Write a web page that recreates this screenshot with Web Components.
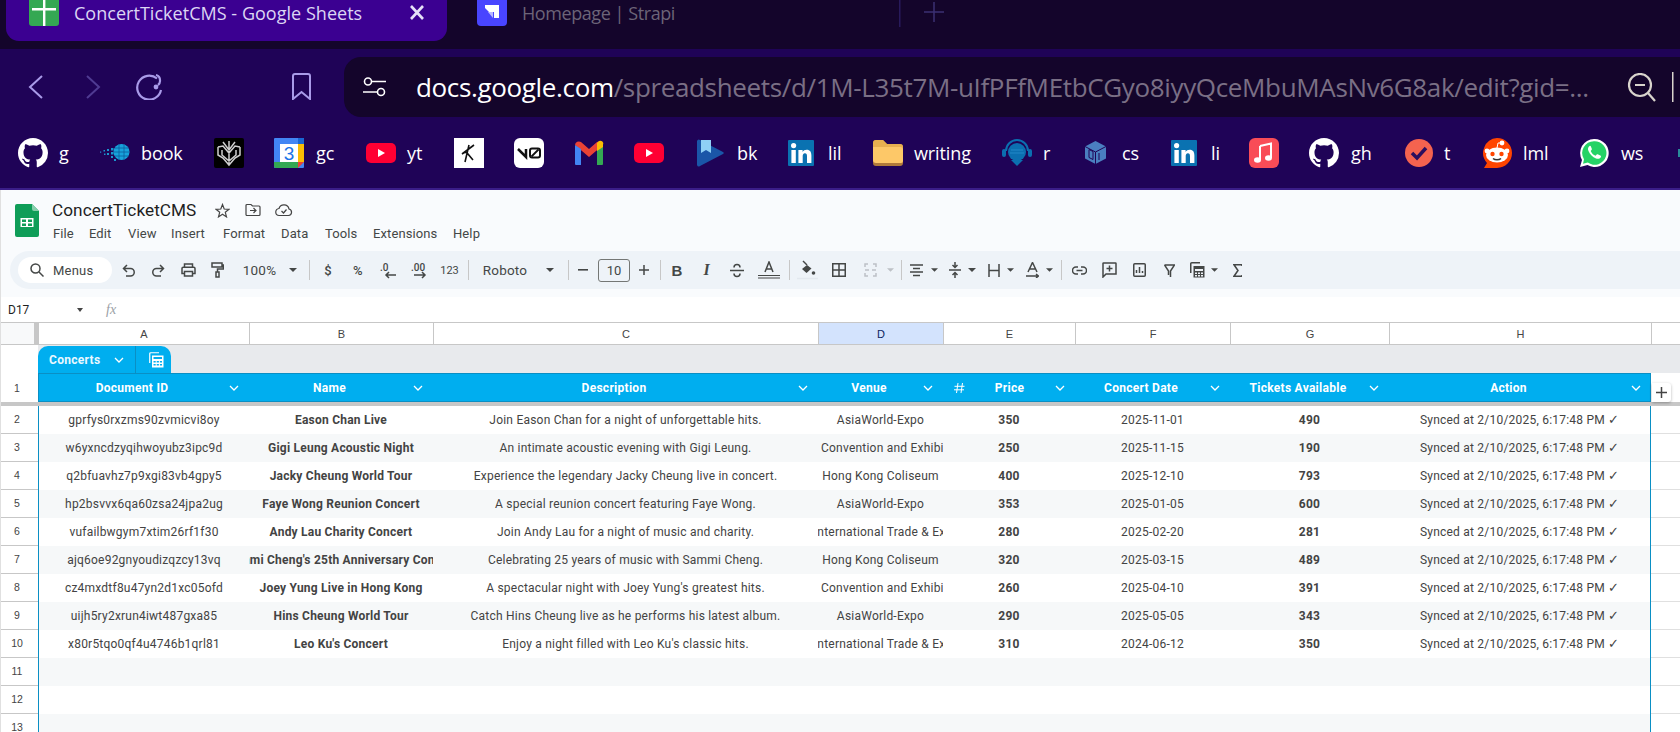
<!DOCTYPE html>
<html><head><meta charset="utf-8"><title>ConcertTicketCMS</title>
<style>
html,body{margin:0;padding:0;height:732px;overflow:hidden;background:#fff}
body{font-family:Roboto,sans-serif;display:flex;flex-direction:column}
</style></head>
<body>
<browser-tabs></browser-tabs>
<browser-nav></browser-nav>
<bookmark-bar></bookmark-bar>
<doc-header></doc-header>
<sheet-toolbar></sheet-toolbar>
<name-box></name-box>
<sheet-grid></sheet-grid>
<script>
const flow=(items)=>{let end=0;return items.map(([x,w,html,cls])=>{const m=x-end;end=x+w;return `<span class="it ${cls||''}" style="margin-left:${m}px;width:${w}px">${html}</span>`}).join('')};
const UI='"Open Sans","Noto Sans",sans-serif';
const GH='<svg width="30" height="30" viewBox="0 0 16 16"><path fill="#fff" d="M8 0C3.58 0 0 3.58 0 8c0 3.54 2.29 6.53 5.47 7.59.4.07.55-.17.55-.38 0-.19-.01-.82-.01-1.49-2.01.37-2.53-.49-2.69-.94-.09-.23-.48-.94-.82-1.13-.28-.15-.68-.52-.01-.53.63-.01 1.08.58 1.23.82.72 1.21 1.87.87 2.33.66.07-.52.28-.87.51-1.07-1.78-.2-3.64-.89-3.64-3.95 0-.87.31-1.59.82-2.15-.08-.2-.36-1.02.08-2.12 0 0 .67-.21 2.2.82.64-.18 1.32-.27 2-.27.68 0 1.36.09 2 .27 1.53-1.04 2.2-.82 2.2-.82.44 1.1.16 1.92.08 2.12.51.56.82 1.27.82 2.15 0 3.07-1.87 3.75-3.65 3.95.29.25.54.73.54 1.48 0 1.07-.01 1.93-.01 2.2 0 .21.15.46.55.38A8.013 8.013 0 0016 8c0-4.42-3.58-8-8-8z"/></svg>';
const YT='<svg width="30" height="30" viewBox="0 0 30 30"><rect y="5" width="30" height="20" rx="5" fill="#ff0033"/><path d="M12 11v8l7-4z" fill="#fff"/></svg>';
const IN=(w=26)=>`<svg width="${w}" height="26" viewBox="0 0 26 26"><rect width="26" height="26" rx="1" fill="#0a72b1"/><circle cx="5.6" cy="5.6" r="2.6" fill="#fff"/><path d="M3.4 10h4.4v13H3.4zM10.4 10h4.2v1.9c.8-1.3 2.2-2.2 4-2.2 3.6 0 4.8 2.3 4.8 5.8V23H19v-6.6c0-1.9-.5-3.1-2.1-3.1s-2.2 1.3-2.2 3.1V23h-4.3z" fill="#fff"/></svg>`;

customElements.define('browser-tabs',class extends HTMLElement{connectedCallback(){const s=this.attachShadow({mode:'open'});s.innerHTML=`<style>
:host{display:flex;height:49px;background:#14052b;overflow:hidden;flex:none;font-family:${UI}}
.active{margin-left:6px;width:441px;height:41px;background:#3b0091;border-radius:0 0 13px 13px;display:flex;align-items:flex-start;flex:none}
.t{font-size:18px;line-height:26px;white-space:nowrap}
svg{display:block;flex:none}
</style>
<div class="active">
<svg style="margin-left:23px" width="30" height="26" viewBox="0 0 30 26"><path d="M0 0h30v23a3 3 0 0 1-3 3H3a3 3 0 0 1-3-3z" fill="#34a853"/><path d="M14 0h2.4v26H14zM3 8h24v2.4H3z" fill="#fff"/></svg>
<span class="t" style="margin-left:15px;color:#dcd6f4;width:335px;letter-spacing:.03px">ConcertTicketCMS - Google Sheets</span>
<svg width="16" height="15" viewBox="0 0 16 15" style="margin-top:5px"><path d="M2 1l12 13M14 1 2 14" stroke="#e6e0f8" stroke-width="2.6" fill="none"/></svg>
</div>
<svg style="margin-left:30px" width="30" height="26" viewBox="0 0 30 26"><path d="M0 0h30v22a4 4 0 0 1-4 4H4a4 4 0 0 1-4-4z" fill="#4945ff"/><path d="M8 5h14v13h-5v-6h-5l-4-4z" fill="#fff"/><path d="M11 12h5v6z" fill="#b9b8ff"/></svg>
<span class="t" style="margin-left:15px;color:#6c6478;width:377px;letter-spacing:-.43px">Homepage | Strapi</span>
<svg width="2" height="27" viewBox="0 0 2 27"><rect width="1.5" height="27" fill="#281a5c"/></svg>
<svg style="margin-left:23px;margin-top:2px" width="20" height="20" viewBox="0 0 20 20"><path d="M10 0v20M0 10h20" stroke="#3b3073" stroke-width="1.5"/></svg>`}});

customElements.define('browser-nav',class extends HTMLElement{connectedCallback(){const s=this.attachShadow({mode:'open'});s.innerHTML=`<style>
:host{display:flex;height:68px;background:#1f0357;padding-top:8px;box-sizing:border-box;flex:none;align-items:flex-start;font-family:${UI}}
svg{display:block;flex:none}
.url{margin-left:32px;flex:1;height:60px;background:#14052b;border-radius:17px 0 0 17px;display:flex;align-items:center;min-width:0;overflow:hidden}
.txt{font-size:26px;white-space:nowrap;width:1190px;margin-left:30px;letter-spacing:-.35px;color:#7a6f85;flex:none;overflow:hidden}
b{font-weight:400;color:#fff}
</style>
<svg style="margin:18px 0 0 28px" width="15" height="24" viewBox="0 0 15 24"><path d="M14 1 2 12l12 11" stroke="#a99be9" stroke-width="2" fill="none"/></svg>
<svg style="margin:18px 0 0 43px" width="15" height="24" viewBox="0 0 15 24"><path d="M1 1l12 11L1 23" stroke="#4f3b92" stroke-width="2" fill="none"/></svg>
<svg style="margin:17px 0 0 35px" width="28" height="26" viewBox="0 0 28 26"><path d="M21 4.5A12 12 0 1 0 25 16" stroke="#a99be9" stroke-width="2.2" fill="none"/><path d="M20 1a5.5 5.5 0 0 1 4 5.5A5 5 0 0 1 22 11" stroke="#a99be9" stroke-width="2.2" fill="none"/><circle cx="20" cy="13" r="2.4" fill="#a99be9"/></svg>
<svg style="margin:16px 0 0 127px" width="21" height="27" viewBox="0 0 21 27"><path d="M2 26V3a2 2 0 0 1 2-2h13a2 2 0 0 1 2 2v23l-8.500-7z" stroke="#a99be9" stroke-width="2" fill="none"/></svg>
<div class="url">
<svg style="margin-left:19px" width="23" height="20" viewBox="0 0 23 20"><circle cx="5" cy="4.500" r="3.500" stroke="#fff" stroke-width="1.600" fill="none"/><path d="M9 4.500h14M0 15h14" stroke="#fff" stroke-width="1.600"/><circle cx="18" cy="15" r="3.500" stroke="#fff" stroke-width="1.600" fill="none"/></svg>
<span class="txt"><b>docs.google.com</b>/spreadsheets/d/1M-L35t7M-uIfPFfMEtbCGyo8iyyQceMbuMAsNv6G8ak/edit?gid=...</span>
<svg style="margin-left:21px" width="30" height="29" viewBox="0 0 30 29"><circle cx="13" cy="12" r="11" stroke="#d8d4cc" stroke-width="2.200" fill="none"/><path d="M8 12h10" stroke="#d8d4cc" stroke-width="2.200"/><path d="M21 20l7 8" stroke="#d8d4cc" stroke-width="2.200"/></svg>
<svg style="margin-left:15px" width="2" height="30" viewBox="0 0 2 30"><rect width="1.500" height="30" fill="#d8d4cc"/></svg>
</div>`}});

customElements.define('bookmark-bar',class extends HTMLElement{connectedCallback(){const s=this.attachShadow({mode:'open'});
const I={
book:'<svg width="30" height="20" viewBox="0 0 30 20"><circle cx="21.500" cy="9" r="8" fill="#17a2dc"/><path d="M15 5h14M14 9h16M15 13h14M19 1v16M24 1v16" stroke="#0d5e9c" stroke-width=".8"/><g fill="#1a96cf"><rect x="11" y="5" width="2.500" height="2.500"/><rect x="11" y="9" width="2.500" height="2.500"/><rect x="11" y="13" width="2" height="2"/><rect x="7" y="6" width="2" height="2"/><rect x="7" y="10" width="2" height="2"/><rect x="3.500" y="7" width="1.500" height="1.500"/><rect x="4" y="10.500" width="1.500" height="1.500"/><rect x="0" y="8.500" width="1.200" height="1.200"/><rect x="14" y="16" width="2" height="2"/></g></svg>',
spider:'<svg width="30" height="30" viewBox="0 0 30 30"><rect width="30" height="30" rx="2" fill="#000"/><path d="M15 3v24M9 4l6 8 6-8M4 9l5-1 6 7 6-7 5 1M4 9v8l5 3 6 7 6-7 5-3V9M8 12v5l7 6 7-6v-5" stroke="#cfcfcf" stroke-width="1.500" fill="none"/></svg>',
cal:'<svg width="30" height="30" viewBox="0 0 30 30"><rect width="30" height="30" rx="1" fill="#4285f4"/><rect x="6" y="6" width="18" height="18" fill="#fff"/><path d="M24 6h6v18h-6z" fill="#fbbc04"/><path d="M0 24h24v6H2a2 2 0 0 1-2-2z" fill="#34a853"/><path d="M24 24h6l-6 6z" fill="#ea4335"/><path d="M24 0h5a1 1 0 0 1 1 1v5h-6z" fill="#1967d2"/><text x="15" y="21.500" text-anchor="middle" font-family="Liberation Sans" font-size="19" fill="#1a73e8">3</text></svg>',
k:'<svg width="30" height="30" viewBox="0 0 30 30"><rect width="30" height="30" fill="#fff"/><path d="M15 7 11 24M20 7 8 16c3-2 5-2 6 0l5 6" stroke="#111" stroke-width="1.600" fill="none"/></svg>',
v0:'<svg width="30" height="30" viewBox="0 0 30 30"><rect width="30" height="30" rx="6" fill="#fff"/><path d="M4 11l8 8v-8" stroke="#111" stroke-width="2.500" fill="none"/><rect x="16" y="10.500" width="10" height="9" rx="2" stroke="#111" stroke-width="2" fill="none"/><path d="M17.500 18.500l7-7" stroke="#111" stroke-width="1.800"/></svg>',
gm:'<svg width="30" height="26" viewBox="0 0 30 26"><path d="M1 5a4 4 0 0 1 6-3l8 7 8-7a4 4 0 0 1 6 3l-14 12z" fill="#ea4335"/><path d="M1 5v19a1 1 0 0 0 1 1h5V9z" fill="#4285f4"/><path d="M29 5v19a1 1 0 0 1-1 1h-5V9z" fill="#34a853"/><path d="M23 3l2-2a3 3 0 0 1 4 4v2l-6 4z" fill="#fbbc04"/></svg>',
bk:'<svg width="30" height="28" viewBox="0 0 30 28"><path d="M1 2a2 2 0 0 1 3-1l23 12a1.200 1.200 0 0 1 0 2L4 27a2 2 0 0 1-3-1z" fill="#1a56a8"/><path d="M5 1h10v13l-5-3-5 3z" fill="#8fd0f5"/></svg>',
folder:'<svg width="30" height="26" viewBox="0 0 30 26"><path d="M0 3a3 3 0 0 1 3-3h7l4 4h13a3 3 0 0 1 3 3v16a3 3 0 0 1-3 3H3a3 3 0 0 1-3-3z" fill="#b07a3a"/><path d="M0 3a3 3 0 0 1 3-3h7l4 4h13a3 3 0 0 1 3 3v3H0z" fill="#e8b050"/><path d="M0 7h27a3 3 0 0 1 3 3v11a2 2 0 0 1-2 2H3a3 3 0 0 1-3-3z" fill="#fdc868"/></svg>',
r:'<svg width="30" height="28" viewBox="0 0 30 28"><path d="M4 12a11 11 0 0 1 22 0" stroke="#0b6fb0" stroke-width="2" fill="none"/><circle cx="15" cy="13" r="9" fill="#0b6fb0"/><path d="M9 21h12l-6 6z" fill="#0b6fb0"/><rect x="0" y="10" width="4" height="8" rx="2" fill="#0b6fb0"/><rect x="26" y="10" width="4" height="8" rx="2" fill="#0b6fb0"/><path d="M9 11h12M8 14h14" stroke="#2a8fcf" stroke-width=".8"/></svg>',
cs:'<svg width="23" height="25" viewBox="0 0 23 25"><path d="M11.500 1 22 6.500v12L11.500 24 1 18.500v-12z" fill="#4a7fc0"/><path d="M1 6.500 11.500 12 22 6.500M11.500 12v12M5 9.500v8l4 2v-8zM15 13v7" stroke="#1f0357" stroke-width="1" fill="none"/></svg>',
music:'<svg width="30" height="30" viewBox="0 0 30 30"><rect width="30" height="30" rx="6" fill="#f94c57"/><path d="M11 8l11-2.500v14.500" stroke="#fff" stroke-width="2" fill="none"/><path d="M11 8v14" stroke="#fff" stroke-width="2"/><ellipse cx="8.500" cy="22" rx="3.500" ry="2.800" fill="#fff"/><ellipse cx="19.500" cy="20" rx="3.500" ry="2.800" fill="#fff"/></svg>',
t:'<svg width="28" height="28" viewBox="0 0 28 28"><circle cx="14" cy="14" r="14" fill="#f4634f"/><path d="M7 14l5 5 9-10" stroke="#2a0f5e" stroke-width="3.500" fill="none"/></svg>',
reddit:'<svg width="30" height="30" viewBox="0 0 30 30"><path d="M15 0a15 15 0 0 1 0 30H2l3-5A15 15 0 0 1 15 0z" fill="#ff4500"/><ellipse cx="15" cy="17" rx="11" ry="7.500" fill="#fff"/><circle cx="5" cy="13" r="2.400" fill="#fff"/><circle cx="25" cy="13" r="2.400" fill="#fff"/><circle cx="20" cy="5" r="2.400" fill="#fff"/><path d="M15 10l1-5 4 0" stroke="#fff" stroke-width="1" fill="none"/><circle cx="10.500" cy="16" r="2.200" fill="#ff4500"/><circle cx="19.500" cy="16" r="2.200" fill="#ff4500"/><path d="M11 20.500c2 1.800 6 1.800 8 0" stroke="#333" stroke-width="1.500" fill="none"/></svg>',
ws:'<svg width="30" height="30" viewBox="0 0 30 30"><path d="M15 1a14 14 0 0 0-12 21l-2 7 7.500-2A14 14 0 1 0 15 1z" fill="#fff"/><path d="M15 3.200a11.800 11.800 0 0 0-10 18l-1 4.600 4.800-1.200A11.800 11.800 0 1 0 15 3.200z" fill="#25d366"/><path d="M10.500 8c-1.500 1-2 3-1 5 1.500 3.500 4 6 7.500 7.500 2 .8 3.800.2 4.800-1.200.5-.8.2-1.500-.5-1.800l-2.600-1.200c-.6-.2-1 0-1.300.5l-.7.900c-2.500-1-4-2.500-5-4.800l.8-.8c.4-.4.5-.8.300-1.300L11.800 8.300c-.3-.7-.7-.7-1.300-.3z" fill="#fff"/></svg>'};
const items=[[18,30,GH],[59,11,'g','l'],[100,30,I.book],[141,43,'book','l'],[214,30,I.spider],[274,30,I.cal],[316,21,'gc','l'],[366,30,YT],[407,16,'yt','l'],[454,30,I.k],[514,30,I.v0],[574,30,I.gm],[634,30,YT],[696,30,I.bk],[737,20,'bk','l'],[788,26,IN()],[828,20,'lil','l'],[873,30,I.folder],[914,57,'writing','l'],[1002,30,I.r],[1043,7,'r','l'],[1084,23,I.cs],[1122,17,'cs','l'],[1171,26,IN()],[1211,8,'li','l'],[1249,30,I.music],[1309,30,GH],[1351,21,'gh','l'],[1405,28,I.t],[1444,7,'t','l'],[1482,30,I.reddit],[1523,24,'lml','l'],[1579,30,I.ws],[1621,22,'ws','l'],[1678,2,'<svg width="2" height="8"><rect width="2" height="8" fill="#2a8a9a"/></svg>']];
s.innerHTML=`<style>
:host{display:flex;height:73px;background:#1f0357;flex:none;align-items:center;box-sizing:border-box;border-bottom:2px solid #3a1d88;padding-bottom:0;font-family:${UI};color:#fff;overflow:hidden}
.it{display:flex;align-items:center;flex:none;height:32px}
.l{font-size:18px;white-space:nowrap;letter-spacing:-.1px}
svg{display:block}
</style>${flow(items)}`}});

customElements.define('doc-header',class extends HTMLElement{connectedCallback(){const s=this.attachShadow({mode:'open'});
const menus=[[53,'File'],[89,'Edit'],[128,'View'],[171,'Insert'],[223,'Format'],[281,'Data'],[325,'Tools'],[373,'Extensions'],[453,'Help']];
const mh=menus.map(([x,t],i)=>{const w=(menus[i+1]?menus[i+1][0]:500)-x;return `<span style="width:${w}px">${t}</span>`}).join('');
s.innerHTML=`<style>
:host{display:flex;height:61px;background:#f9fbfd;flex:none;font-family:Roboto,sans-serif;color:#3c4043;box-sizing:border-box;border-left:1px solid #e0e0e0}
svg{display:block;flex:none}
.r{display:flex;flex-direction:column;margin-left:13px}
.top{display:flex;align-items:center;height:26px;margin-top:7px}
h1{font:400 17.200px Roboto,sans-serif;margin:0;color:#1f1f1f;width:163px;letter-spacing:.05px}
.m{display:flex;font-size:13px;margin-top:2px;line-height:18px;color:#444746;letter-spacing:.1px;margin-left:1px}
</style>
<svg style="margin:14px 0 0 14px" width="24" height="33" viewBox="0 0 24 33"><path d="M2 0h15l7 7v24a2 2 0 0 1-2 2H2a2 2 0 0 1-2-2V2a2 2 0 0 1 2-2z" fill="#0f9d58"/><path d="M17 0l7 7h-5a2 2 0 0 1-2-2z" fill="#87ceac"/><path d="M5.500 14h13v9h-13zM7 15.500v2.500h4v-2.500zM13 15.500v2.500h4v-2.500zM7 19.500V22h4v-2.500zM13 19.500V22h4v-2.500z" fill="#fff" fill-rule="evenodd"/></svg>
<div class="r">
<div class="top"><h1>ConcertTicketCMS</h1>
<svg width="15" height="15" viewBox="0 0 15 15"><path d="M7.500 1.500 9.200 6l4.800.300-3.700 3 1.200 4.600-4-2.600-4 2.600 1.200-4.600-3.700-3L5.800 6z" stroke="#444" stroke-width="1.200" fill="none"/></svg>
<svg style="margin-left:15px" width="16" height="14" viewBox="0 0 16 14"><path d="M1 2.500a1 1 0 0 1 1-1h4l1.500 1.500H14a1 1 0 0 1 1 1v7.500a1 1 0 0 1-1 1H2a1 1 0 0 1-1-1zM5 7.500h6M8.500 5l2.500 2.500-2.500 2.500" stroke="#444" stroke-width="1.200" fill="none"/></svg>
<svg style="margin-left:14px" width="18" height="14" viewBox="0 0 18 14"><path d="M4.500 12.500a3.500 3.500 0 0 1-.5-7 5.200 5.200 0 0 1 10 .5 3.300 3.300 0 0 1-.5 6.500zM6.500 8l2 2 3-3.500" stroke="#444" stroke-width="1.200" fill="none"/></svg></div>
<div class="m">${mh}</div>
</div>`}});

customElements.define('sheet-toolbar',class extends HTMLElement{connectedCallback(){const s=this.attachShadow({mode:'open'});
const st='stroke="#444746" stroke-width="1.500" fill="none"';
const ic=(w,h,inner)=>`<svg width="${w}" height="${h}" viewBox="0 0 ${w} ${h}">${inner}</svg>`;
const caret='<svg width="8" height="4" viewBox="0 0 8 4"><path d="M0 0h8L4 4z" fill="#444746"/></svg>';
const sep='<span class="sep"></span>';
const items=[
[122,13,ic(13,13,`<path d="M5 1 1.500 4.500 5 8M2 4.500h6.500a3.700 3.700 0 0 1 0 7.500H4" ${st}/>`)],
[152,13,ic(13,13,`<path d="M8 1l3.500 3.500L8 8M11 4.500H4.500a3.700 3.700 0 0 0 0 7.500H9" ${st}/>`)],
[181,15,ic(15,14,`<path d="M3.500 4V1h8v3M3.500 10.500H1V5.500a1.300 1.300 0 0 1 1.300-1.300h10.400A1.300 1.300 0 0 1 14 5.500v5h-2.500M3.500 8.500h8V13h-8z" ${st}/>`)],
[211,13,ic(13,16,`<path d="M1 1h10v4H1zM11 3h1.500v4H6.500v3M5 10h3v5H5z" ${st}/>`)],
[242,35,'100%','tt'],[289,8,caret],[309,1,sep],
[324,8,'$','tt sm'],[353,10,'%','tt sm'],
[380,17,ic(17,17,`<text x="0" y="9" font-family="Roboto" font-size="10" font-weight="500" fill="#444746">.0</text><path d="M16 13H6M9 10l-3 3 3 3" ${st}/>`)],
[411,17,ic(17,17,`<text x="0" y="9" font-family="Roboto" font-size="10" font-weight="500" fill="#444746">.00</text><path d="M3 13h11M11 10l3 3-3 3" ${st}/>`)],
[441,17,'123','tt xs'],[468,1,sep],[483,44,'Roboto','tt'],[546,8,caret],[568,1,sep],
[578,10,ic(10,2,`<rect width="10" height="1.600" fill="#444746"/>`)],
[598,32,'10','box'],
[639,10,ic(10,10,`<path d="M5 0v10M0 5h10" ${st}/>`)],[660,1,sep],
[673,8,'<b class="tb">B</b>','g'],
[702,9,'<i class="ti">I</i>','g'],
[730,14,ic(14,15,`<path d="M0 7.500h14M4 4.500a3 3 0 0 1 6 0M4 10.500a3 3 0 0 0 6 0" ${st}/>`)],
[758,22,ic(22,18,`<path d="M7 11l4-10 4 10M8.500 8h5" ${st}/><path d="M0 14.500h22M0 17h22" stroke="#444746" stroke-width="1.200"/>`)],[789,1,sep],
[797,21,ic(21,20,`<path d="M10 5l-5 4 4.500 4 5-4.500z" fill="#444746"/><path d="M6 1l4 4" ${st}/><circle cx="16.500" cy="13" r="1.800" fill="#444746"/><path d="M0 18.500h21" stroke="#e3e8ef" stroke-width="1.500"/>`)],
[832,14,ic(14,14,`<path d="M.750.750h12.500v12.500H.750zM7 .750v12.500M.750 7h12.500" ${st}/>`)],
[864,13,ic(13,14,`<path d="M1 4V1h3M1 10v3h3M12 4V1H9M12 10v3H9M5 7H1M8 7h4" stroke="#bdc1c6" stroke-width="1.500" fill="none"/>`)],
[887,7,'<svg width="8" height="4" viewBox="0 0 8 4"><path d="M0 0h8L4 4z" fill="#bdc1c6"/></svg>'],[901,1,sep],
[910,13,ic(13,13,`<path d="M0 1h13M3 4.500h7M0 8h13M3 11.500h7" ${st}/>`)],[931,7,caret],
[949,12,ic(12,16,`<path d="M0 8h12M6 0v5M3.500 3 6 5.500 8.500 3M6 16v-5M3.500 13 6 10.500 8.500 13" ${st}/>`)],[968,8,caret],
[988,12,ic(12,13,`<path d="M1 0v13M11 0v13M1 6.500h10" ${st}/>`)],[1007,7,caret],
[1026,13,ic(13,16,`<path d="M2 10l4.500-9.500L11 10M3.500 7h6M0 14h12M10 12l2.500 2-2.500 2" ${st}/>`)],[1046,7,caret],[1061,1,sep],
[1072,15,ic(15,9,`<path d="M6 1H4a3.500 3.500 0 0 0 0 7h2M9 1h2a3.500 3.500 0 0 1 0 7H9M4.500 4.500h6" ${st}/>`)],
[1102,15,ic(15,16,`<path d="M1 15V1.500a.5.5 0 0 1 .5-.5h12a.5.5 0 0 1 .5.500V12H4zM7.500 3.500v6M4.500 6.500h6" ${st}/>`)],
[1133,13,ic(13,14,`<rect x=".750" y=".750" width="11.500" height="12.500" rx="1" ${st}/><path d="M3.500 10V7M6.500 10V4M9.500 10V8" ${st}/>`)],
[1164,11,ic(11,13,`<path d="M.500 1h10L6.500 7v6M.500 1l4 6v4" ${st}/>`)],
[1190,15,ic(15,16,`<path d="M.750 11V1.750a1 1 0 0 1 1-1H10" ${st}/><rect x="3.500" y="4" width="11" height="11.500" fill="#444746"/><path d="M5 7h8v2H5zM5 10.500h2v1.500H5zM8 10.500h2v1.500H8zM11 10.500h2v1.500h-2zM5 13h2v1.500H5zM8 13h2v1.500H8zM11 13h2v1.500h-2z" fill="#eef2f7"/>`)],[1211,7,caret],
[1233,9,ic(9,13,`<path d="M9 2V.750H1L5 6.500 1 12.250h8V11" ${st}/>`)]];
s.innerHTML=`<style>
:host{display:flex;height:46px;background:#f9fbfd;flex:none;box-sizing:border-box;padding-left:9px;border-left:1px solid #e0e0e0;font-family:Roboto,sans-serif;color:#444746;padding-bottom:8px}
.bar{flex:1;background:#eef3f8;border-radius:19px 0 0 19px;display:flex;align-items:center;height:38px;overflow:hidden}
.pill{margin-left:8px;width:94px;height:26px;background:#fff;border-radius:13px;display:flex;align-items:center;font-size:13px;flex:none;box-sizing:border-box;padding-left:12px;color:#444746;letter-spacing:.2px}
.rest{display:flex;align-items:center}
.it{display:flex;align-items:center;justify-content:center;flex:none;white-space:nowrap}
.tt{font-size:13.500px;letter-spacing:.2px}
.sm{font-size:13px;font-weight:500}.xs{font-size:11px;letter-spacing:0}
.sep{display:block;width:1px;height:20px;background:#c7c7c7;flex:none}
.box{height:23px;border:1px solid #747775;border-radius:3px;box-sizing:border-box;font-size:13px}
.tb{font:700 15px "Liberation Sans",sans-serif}
.ti{font:italic 700 16px "Liberation Serif",serif}
svg{display:block}
</style>
<div class="bar"><span class="pill"><svg width="14" height="14" viewBox="0 0 14 14" style="margin-right:9px"><circle cx="5.500" cy="5.500" r="4.500" stroke="#444746" stroke-width="1.500" fill="none"/><path d="M9 9l4.500 4.500" stroke="#444746" stroke-width="1.500"/></svg>Menus</span>
<span class="rest">${flow(items.map(a=>[a[0]-112,a[1],a[2],a[3]]))}</span></div>`}});

customElements.define('name-box',class extends HTMLElement{connectedCallback(){const s=this.attachShadow({mode:'open'});s.innerHTML=`<style>
:host{display:flex;height:25px;background:#fff;flex:none;align-items:center;font:12px Roboto,sans-serif;color:#1f1f1f;box-sizing:border-box;border-left:1px solid #e0e0e0}
i{font:italic 14px "Liberation Serif",serif;color:#9aa0a6;margin-left:23px}
svg{display:block}
</style><span style="margin-left:7px;width:69px">D17</span>
<svg width="6" height="4" viewBox="0 0 6 4"><path d="M0 0h6L3 4z" fill="#444"/></svg>
<i>fx</i>`}});

customElements.define('col-head',class extends HTMLElement{connectedCallback(){const s=this.attachShadow({mode:'open'});s.innerHTML=`<style>
:host{display:flex;align-items:center;justify-content:center;height:100%;font:11px "Liberation Sans",Arial,sans-serif;color:#444;box-sizing:border-box;border-right:1px solid #c7c7c7}
:host([sel]){background:#d3e3fd;color:#0b1f5c}
</style><slot></slot>`}});

customElements.define('table-cell',class extends HTMLElement{connectedCallback(){const s=this.attachShadow({mode:'open'});s.innerHTML=`<style>
:host{display:flex;align-items:center;justify-content:center;overflow:hidden;white-space:nowrap;min-width:0;font:12px Roboto,"DejaVu Sans",sans-serif;color:#434343;letter-spacing:.22px;box-sizing:border-box;height:100%}
:host([bold]){font-weight:700}
</style><slot></slot>`}});

customElements.define('table-head',class extends HTMLElement{connectedCallback(){const s=this.attachShadow({mode:'open'});const hash=this.hasAttribute('hash');s.innerHTML=`<style>
:host{display:flex;align-items:center;height:100%;box-sizing:border-box;padding:0 11px 0 0;font:700 12px Roboto,sans-serif;color:#fff;letter-spacing:.28px;min-width:0}
.t{flex:1;text-align:center;white-space:nowrap}
svg{display:block;flex:none}
</style>${hash?'<svg style="margin-left:10px" width="11" height="10" viewBox="0 0 11 10"><path d="M4 0 2.500 10M8.500 0 7 10M.500 3.300h10M0 6.800h10" stroke="#fff" stroke-width="1"/></svg>':''}<span class="t"><slot></slot></span>
<svg style="margin-left:${hash?1:4}px" width="10" height="6" viewBox="0 0 10 6"><path d="M1 1l4 4 4-4" stroke="#fff" stroke-width="1.300" fill="none"/></svg>`}});

customElements.define('sheet-grid',class extends HTMLElement{connectedCallback(){const s=this.attachShadow({mode:'open'});
const sync='Synced at 2/10/2025, 6:17:48 PM<span style="font:13px \'DejaVu Sans\',sans-serif;margin-left:3px">✓</span>';
const HITEC='Hong Kong International Trade & Exhibition Hall';
const data=[
['gprfys0rxzms90zvmicvi8oy','Eason Chan Live','Join Eason Chan for a night of unforgettable hits.','AsiaWorld-Expo','350','2025-11-01','490'],
['w6yxncdzyqihwoyubz3ipc9d','Gigi Leung Acoustic Night','An intimate acoustic evening with Gigi Leung.','Hong Kong Convention and Exhibition Centre','250','2025-11-15','190'],
['q2bfuavhz7p9xgi83vb4gpy5','Jacky Cheung World Tour','Experience the legendary Jacky Cheung live in concert.','Hong Kong Coliseum','400','2025-12-10','793'],
['hp2bsvvx6qa60zsa24jpa2ug','Faye Wong Reunion Concert','A special reunion concert featuring Faye Wong.','AsiaWorld-Expo','353','2025-01-05','600'],
['vufailbwgym7xtim26rf1f30','Andy Lau Charity Concert','Join Andy Lau for a night of music and charity.',HITEC,'280','2025-02-20','281'],
['ajq6oe92gnyoudizqzcy13vq',"Sammi Cheng's 25th Anniversary Concert",'Celebrating 25 years of music with Sammi Cheng.','Hong Kong Coliseum','320','2025-03-15','489'],
['cz4mxdtf8u47yn2d1xc05ofd','Joey Yung Live in Hong Kong',"A spectacular night with Joey Yung's greatest hits.",'Hong Kong Convention and Exhibition Centre','260','2025-04-10','391'],
['uijh5ry2xrun4iwt487gxa85','Hins Cheung World Tour','Catch Hins Cheung live as he performs his latest album.','AsiaWorld-Expo','290','2025-05-05','343'],
['x80r5tqo0qf4u4746b1qrl81',"Leo Ku's Concert","Enjoy a night filled with Leo Ku's classic hits.",HITEC,'310','2024-06-12','350'],
['','','','','','',''],['','','','','','',''],['','','','','','','']];
const esc=t=>t.replace(/&/g,'&amp;');
const rows=data.map((r,i)=>{const n=i+2;const alt=i%2==1;return `<div class="row ${alt?'alt':''}" style="${i==0?'height:27.5px':''}"><div class="rh">${n}</div>
<table-cell>${r[0]}</table-cell><table-cell bold>${esc(r[1])}</table-cell><table-cell>${r[2]}</table-cell><table-cell>${esc(r[3])}</table-cell><table-cell bold>${r[4]}</table-cell><table-cell>${r[5]}</table-cell><table-cell bold>${r[6]}</table-cell><table-cell>${r[0]?sync:''}</table-cell><div class="after"></div></div>`}).join('');
s.innerHTML=`<style>
:host{display:block;flex:1;min-height:0;overflow:hidden;background:#fff;font-family:Roboto,sans-serif;border-left:1px solid #e0e0e0;box-sizing:border-box;position:relative}
.row,.hd,.band,.thead{display:grid;grid-template-columns:37px 211px 184px 385px 125px 132px 155px 159px 262px 1fr}
.hd{height:23px;border-top:1px solid #c7c7c7;border-bottom:1px solid #c7c7c7;box-sizing:border-box}
.corner{background:#f8f9fa;border-right:5px solid #c7c7c7;box-sizing:border-box;height:100%}
.band{height:28px}
.rh{display:flex;align-items:center;justify-content:center;padding-right:5px;font:10.500px "Liberation Sans",Arial,sans-serif;color:#444;border-bottom:1px solid #c7c7c7;box-sizing:border-box;background:#fff;height:100%}
.strip{grid-column:2/-1;background:#e8eaed;display:flex;align-items:flex-end;height:100%}
.ttab{height:27px;width:133px;background:#00aeef;border-radius:10px 10px 0 0;display:flex;align-items:center;color:#e9f8ff;font:700 12px Roboto,sans-serif;letter-spacing:.3px;box-sizing:border-box;padding-left:11px;padding-top:1px;flex:none}
.ttab span{width:54px;margin-right:11px}
.dv{width:1px;height:27px;background:#0a8fc4;margin:-1px 13px 0 11px}
.thead{height:29px}
.thead .blue{grid-column:2/10;display:grid;grid-template-columns:211px 184px 385px 125px 132px 155px 159px 262px;background:#00aeef;border:1px solid #0a8fc4;box-sizing:border-box;height:29px}
.freeze{height:4px;background:#c7c7c7}
.row{height:28px}
.row table-cell{background:#fff}
.row.alt table-cell{background:#f6f8f9}
.row table-cell:nth-child(2){border-left:1.500px solid #0a8fc4}
.row table-cell:nth-child(9){border-right:1.500px solid #0a8fc4}
.after{border-bottom:1px solid #e0e0e0;box-sizing:border-box;height:100%}
.add{position:absolute;left:1651px;top:61px;width:19px;height:19px;background:#fff;border-radius:0 3px 3px 0;box-shadow:0 1px 3px rgba(0,0,0,.3);display:flex;align-items:center;justify-content:center;z-index:2}
svg{display:block;flex:none}
</style>
<div class="hd" style="grid-template-columns:38px 211px 184px 385px 125px 132px 155px 159px 262px 1fr"><div class="corner"></div><col-head>A</col-head><col-head>B</col-head><col-head>C</col-head><col-head sel>D</col-head><col-head>E</col-head><col-head>F</col-head><col-head>G</col-head><col-head>H</col-head><div></div></div>
<div class="band"><div class="rh" style="border-bottom-color:#fff"></div><div class="strip"><div class="ttab"><span>Concerts</span><svg width="10" height="6" viewBox="0 0 10 6"><path d="M1 1l4 4 4-4" stroke="#fff" stroke-width="1.300" fill="none"/></svg><div class="dv"></div><svg width="15" height="16" viewBox="0 0 15 16"><path d="M.750 11V1.750a1 1 0 0 1 1-1H10" stroke="#fff" stroke-width="1.200" fill="none"/><rect x="3" y="3.500" width="11.500" height="12" fill="#fff"/><path d="M4.500 5h8.500v2H4.500zM4.500 9h2.200v1.500H4.500zM7.700 9h2.200v1.500H7.700zM10.900 9h2.100v1.500h-2.100zM4.500 12h2.200v1.500H4.500zM7.700 12h2.200v1.500H7.700zM10.900 12h2.100v1.500h-2.100z" fill="#00aeef"/></svg></div></div></div>
<div class="thead"><div class="rh" style="border-bottom:0">1</div><div class="blue"><table-head>Document ID</table-head><table-head>Name</table-head><table-head>Description</table-head><table-head>Venue</table-head><table-head hash>Price</table-head><table-head>Concert Date</table-head><table-head>Tickets Available</table-head><table-head>Action</table-head></div><div></div></div>
<div class="freeze"></div>
<div class="add"><svg width="11" height="11" viewBox="0 0 11 11"><path d="M5.500 0v11M0 5.500h11" stroke="#444" stroke-width="1.500"/></svg></div>
${rows}`}});
</script>
</body></html>
